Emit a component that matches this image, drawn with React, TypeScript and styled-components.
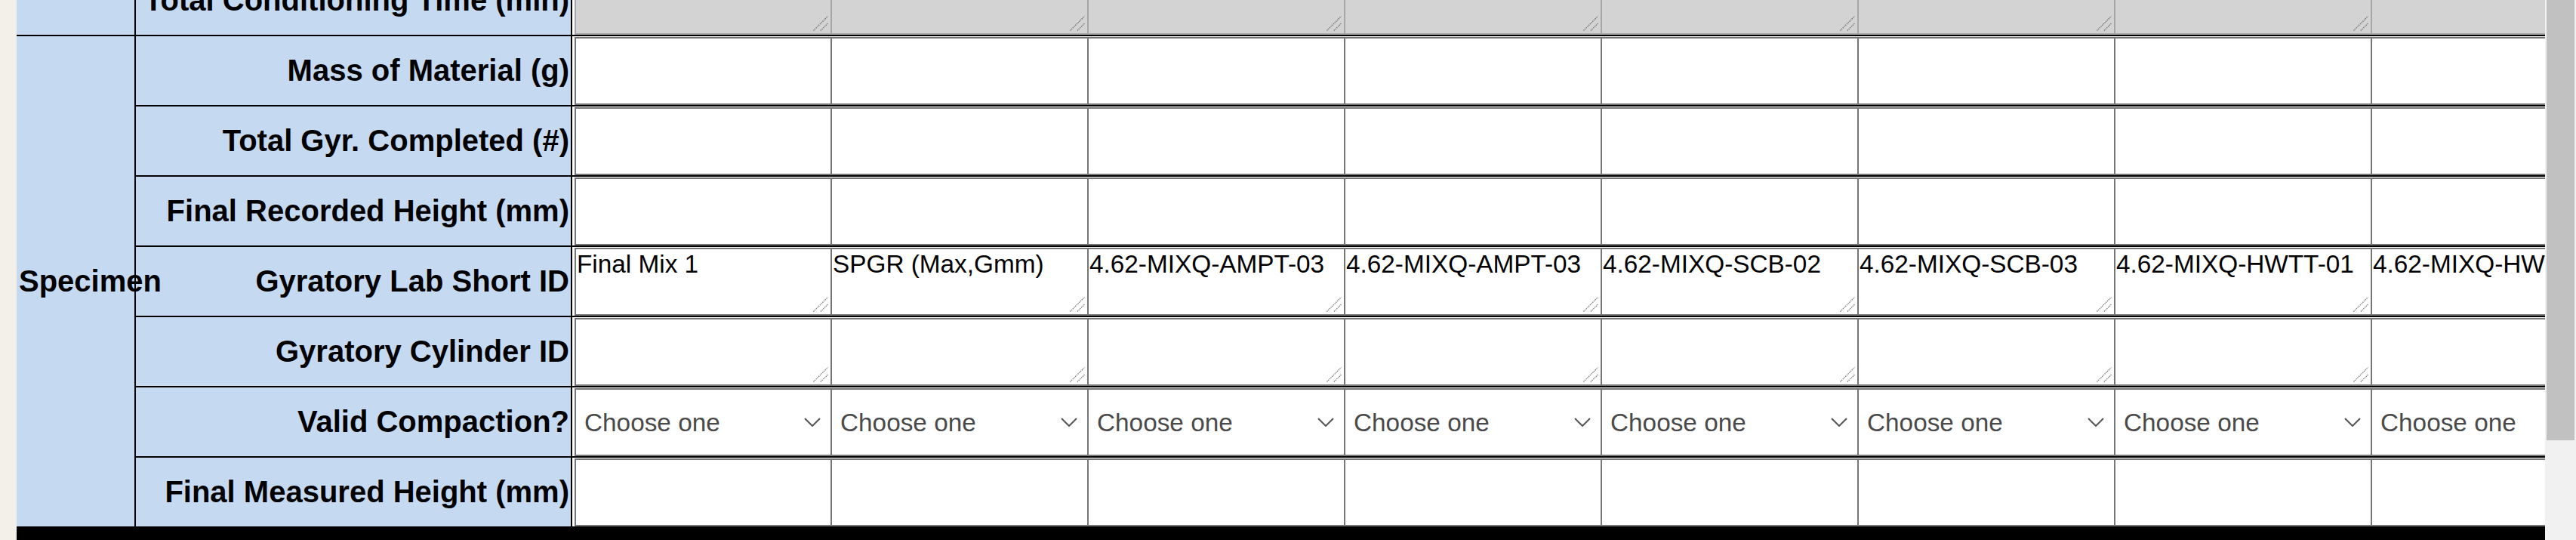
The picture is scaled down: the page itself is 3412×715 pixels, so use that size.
import React from "react";
import styled, { createGlobalStyle } from "styled-components";

const GlobalStyle = createGlobalStyle`
  html, body { margin: 0; padding: 0; background: #f1f1f1; }
  body { font-family: "Liberation Sans", Arial, sans-serif; }
`;

const BLUE = "#c5d9f1";
const FIELD_BORDER = "#767676";

const Page = styled.div`
  display: flex;
  width: 3412px;
  height: 715px;
  overflow: hidden;
`;

const Margin = styled.div`
  flex: 0 0 22px;
  background: #f3f0e9;
`;

const Viewport = styled.div`
  flex: 1 1 auto;
  min-width: 0;
  height: 715px;
  overflow: hidden;
  background: #fff;
`;

const Sheet = styled.div`
  display: flex;
  flex-direction: column;
  width: max-content;
`;

const Section = styled.div`
  display: flex;
`;

const GroupCell = styled.div`
  position: relative;
  z-index: 1;
  flex: none;
  width: 158px;
  min-width: 0;
  box-sizing: border-box;
  background: ${BLUE};
  border-top: 2px solid #000;
  border-right: 2px solid #000;
  display: flex;
  align-items: center;
  padding-left: 3px;
  font-weight: bold;
  font-size: 40px;
  color: #000;
  white-space: nowrap;
`;

const Rows = styled.div`
  display: flex;
  flex-direction: column;
`;

const Row = styled.div`
  display: flex;
  height: 93px;
`;

const LabelCell = styled.div`
  flex: none;
  width: 578px;
  min-width: 0;
  box-sizing: border-box;
  background: ${BLUE};
  border-top: 2px solid #000;
  border-right: 2px solid #000;
  display: flex;
  align-items: center;
  justify-content: flex-end;
  padding-right: 2px;
  font-weight: bold;
  font-size: 40px;
  color: #000;
  white-space: nowrap;
`;

const DataCell = styled.div<{ $first: boolean }>`
  flex: none;
  width: ${(p) => (p.$first ? 342 : 340)}px;
  min-width: 0;
  box-sizing: border-box;
  border-top: 2px solid #000;
  padding: 1px 0 0 ${(p) => (p.$first ? 3 : 0)}px;
  background: #fff;
  display: flex;
`;

const FieldWrap = styled.div`
  position: relative;
  flex: 1 1 0;
  display: flex;
  min-width: 0;
`;

const fieldBase = `
  flex: 1 1 0;
  width: 0;
  min-width: 0;
  box-sizing: border-box;
  margin: 0;
  height: 100%;
  border-style: solid;
  border-width: 2px 0 2px 2px;
  border-radius: 0;
  outline: none;
  font-family: "Liberation Sans", Arial, sans-serif;
  font-size: 33.33px;
`;

const TextArea = styled.textarea<{ $disabled?: boolean }>`
  ${fieldBase}
  border-color: ${(p) => (p.$disabled ? "#a6a6a6" : FIELD_BORDER)};
  background: ${(p) => (p.$disabled ? "#d3d3d3" : "#fff")};
  color: #000;
  padding: 1px 1px;
  resize: none;
  overflow: hidden;
  line-height: normal;
`;

const TextInput = styled.input`
  ${fieldBase}
  border-color: ${FIELD_BORDER};
  background: #fff;
  color: #000;
  padding: 0 4px;
`;

const Select = styled.select`
  ${fieldBase}
  appearance: none;
  -webkit-appearance: none;
  border-color: ${FIELD_BORDER};
  background: #fff;
  color: #4a4a4a;
  padding: 0 0 0 11px;
`;

const Grip = styled.svg`
  position: absolute;
  right: 3px;
  bottom: 5px;
  width: 20px;
  height: 20px;
  pointer-events: none;
`;

const Chevron = styled.svg`
  position: absolute;
  right: 13px;
  top: 50%;
  width: 22px;
  height: 12px;
  margin-top: -6px;
  pointer-events: none;
`;

const BlackBar = styled.div`
  height: 40px;
  background: #000;
`;

const ScrollTrack = styled.div`
  flex: 0 0 41px;
  box-sizing: border-box;
  padding: 0 2px;
  background: #f1f1f1;
`;

const ScrollThumb = styled.div`
  height: 583px;
  background: #c1c1c1;
`;

const COLS = 8;

type Kind = "input" | "textarea" | "select" | "disabled";

interface RowDef {
  label: string;
  kind: Kind;
  values?: string[];
}

const shortIds = [
  "Final Mix 1",
  "SPGR (Max,Gmm)",
  "4.62-MIXQ-AMPT-03",
  "4.62-MIXQ-AMPT-03",
  "4.62-MIXQ-SCB-02",
  "4.62-MIXQ-SCB-03",
  "4.62-MIXQ-HWTT-01",
  "4.62-MIXQ-HWTT-02",
];

const conditioningRows: RowDef[] = [
  { label: "Total Conditioning Time (min)", kind: "disabled" },
];

const specimenRows: RowDef[] = [
  { label: "Mass of Material (g)", kind: "input" },
  { label: "Total Gyr. Completed (#)", kind: "input" },
  { label: "Final Recorded Height (mm)", kind: "input" },
  { label: "Gyratory Lab Short ID", kind: "textarea", values: shortIds },
  { label: "Gyratory Cylinder ID", kind: "textarea" },
  { label: "Valid Compaction?", kind: "select" },
  { label: "Final Measured Height (mm)", kind: "input" },
];

const ResizeGrip: React.FC<{ color: string }> = ({ color }) => (
  <Grip viewBox="0 0 20 20">
    <line x1="0.5" y1="19.5" x2="19.5" y2="0.5" stroke={color} strokeWidth="1.3" strokeDasharray="1.3 1.1" />
    <line x1="10" y1="19.5" x2="19.5" y2="10" stroke={color} strokeWidth="1.3" strokeDasharray="1.3 1.1" />
  </Grip>
);

const Field: React.FC<{ kind: Kind; value?: string }> = ({ kind, value }) => {
  if (kind === "input") {
    return (
      <FieldWrap>
        <TextInput type="text" defaultValue="" />
      </FieldWrap>
    );
  }
  if (kind === "select") {
    return (
      <FieldWrap>
        <Select defaultValue="">
          <option value="">Choose one</option>
          <option value="yes">Yes</option>
          <option value="no">No</option>
        </Select>
        <Chevron viewBox="0 0 22 12">
          <polyline points="1,1 11,11 21,1" fill="none" stroke="#555" strokeWidth="2" />
        </Chevron>
      </FieldWrap>
    );
  }
  const disabled = kind === "disabled";
  return (
    <FieldWrap>
      <TextArea $disabled={disabled} readOnly={disabled} defaultValue={value ?? ""} />
      <ResizeGrip color={disabled ? "#6a6a6a" : "#6e6e6e"} />
    </FieldWrap>
  );
};

const SheetRow: React.FC<{ def: RowDef }> = ({ def }) => (
  <Row>
    <LabelCell>{def.label}</LabelCell>
    {Array.from({ length: COLS }, (_, i) => (
      <DataCell key={i} $first={i === 0}>
        <Field kind={def.kind} value={def.values?.[i]} />
      </DataCell>
    ))}
  </Row>
);

export default function App() {
  const scrollTo = (el: HTMLDivElement | null) => {
    if (el) el.scrollTop = 47;
  };
  React.useLayoutEffect(() => {
    const el = document.getElementById("sheet-viewport");
    if (el) el.scrollTop = 47;
  }, []);

  return (
    <>
      <GlobalStyle />
      <Page>
        <Margin />
        <Viewport id="sheet-viewport" ref={scrollTo}>
          <Sheet>
            <Section>
              <GroupCell />
              <Rows>
                {conditioningRows.map((r) => (
                  <SheetRow key={r.label} def={r} />
                ))}
              </Rows>
            </Section>
            <Section>
              <GroupCell>Specimen</GroupCell>
              <Rows>
                {specimenRows.map((r) => (
                  <SheetRow key={r.label} def={r} />
                ))}
              </Rows>
            </Section>
            <BlackBar />
          </Sheet>
        </Viewport>
        <ScrollTrack>
          <ScrollThumb />
        </ScrollTrack>
      </Page>
    </>
  );
}
